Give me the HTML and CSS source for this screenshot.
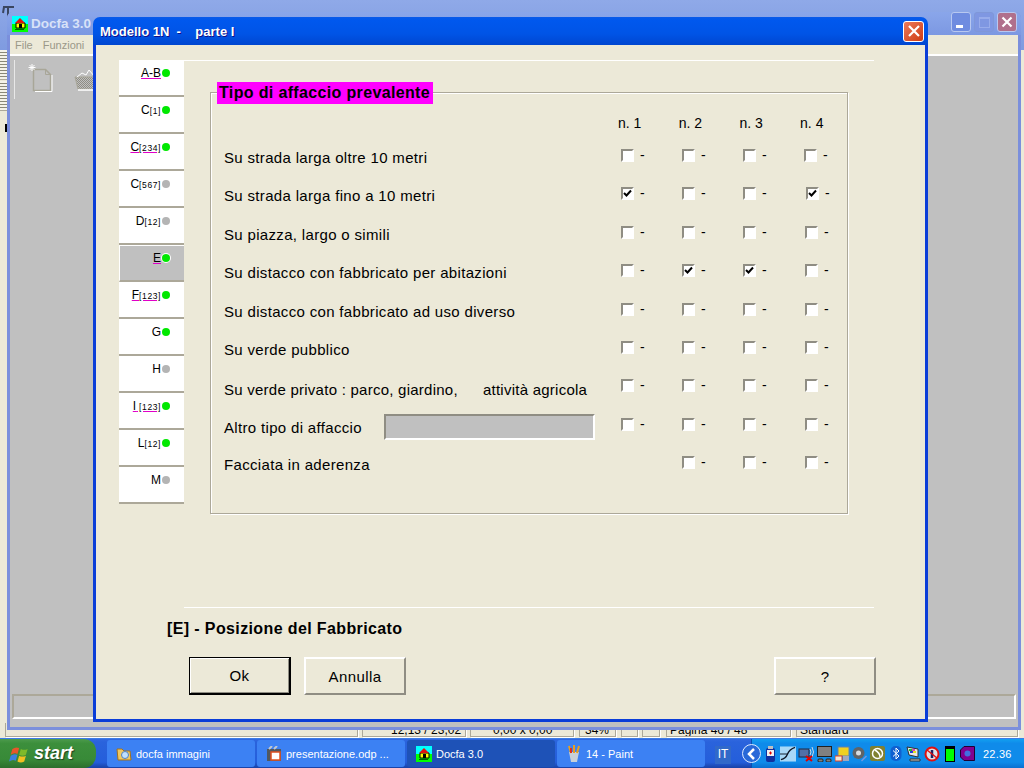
FILE: index.html
```html
<!DOCTYPE html>
<html lang="en">
<head>
    <meta charset="UTF-8">
    <title>Modello 1N - parte I</title>
    <link rel="stylesheet" href="styles.css">
</head>
<body>

<svg class="defs" width="0" height="0">
    <defs>
        <pattern id="dither" width="2" height="2" patternUnits="userSpaceOnUse">
            <rect width="2" height="2" fill="#c0c0c0"/>
            <rect width="1" height="1" fill="#8f8d83"/>
            <rect x="1" y="1" width="1" height="1" fill="#8f8d83"/>
        </pattern>
    </defs>
    <symbol id="docfa" viewBox="0 0 16 16">
        <rect width="16" height="16" fill="#00ff00"/>
        <rect width="16" height="8" fill="#00ffff"/>
        <path d="M4 12V7h9v5z" fill="#ffff00" stroke="#000"/>
        <path d="M3 7l5-5 5 5z" fill="#e01010"/>
        <rect x="7" y="8" width="3" height="4" fill="#000"/>
        <rect x="3" y="13" width="9" height="1" fill="#006000"/>
    </symbol>
    <symbol id="tick" viewBox="0 0 9 9">
        <path d="M1 4l2.5 2.5L8 1.5" fill="none" stroke="#000" stroke-width="2"/>
    </symbol>
</svg>

<div class="desktop">
    <div class="back-window">
        <div class="back-title">
            <svg width="13" height="14" viewBox="0 0 13 14"><path d="M1 2h11M6 2v11M2 2L1 8" fill="none" stroke="#3a4660" stroke-width="2"/></svg>
        </div>
        <div class="back-left">
            <div class="grip"></div>
            <div class="grip"></div>
            <div class="black-mark"></div>
        </div>
        <div class="back-status">
            <span class="stat stat-main"></span>
            <span class="stat stat-pos">12,13 / 23,02</span>
            <span class="stat stat-size">0,00 x 0,00</span>
            <span class="stat stat-zoom">34%</span>
            <span class="stat stat-a"></span>
            <span class="stat stat-b"></span>
            <span class="stat stat-page">Pagina 46 / 48</span>
            <span class="stat stat-style">Standard</span>
        </div>
    </div>

    <div class="app-window">
        <div class="app-title">
            <svg class="app-icon" width="16" height="16"><use href="#docfa"/></svg>
            <span class="app-name">Docfa 3.0</span>
            <span class="cap-btn cap-min"></span>
            <span class="cap-btn cap-max"></span>
            <span class="cap-btn cap-close">
                <svg width="14" height="14" viewBox="0 0 14 14"><path d="M2.5 2.5l9 9M11.5 2.5l-9 9" stroke="#fff" stroke-width="2.2"/></svg>
            </span>
        </div>
        <div class="app-menu"><span>File</span><span>Funzioni</span></div>
        <div class="app-body">
            <div class="toolbar">
                <div class="tool-sep"></div>
                <svg class="tool-new" width="26" height="30" viewBox="0 0 26 30">
                    <path d="M5.5 6.5h12l5 5v16h-17z" fill="none" stroke="#a8a698" stroke-width="1.5"/>
                    <path d="M7 28.5h17V12" fill="none" stroke="#fff"/>
                    <path d="M17.5 6.5v5h5" fill="none" stroke="#a8a698"/>
                    <path d="M4 1v7M0.500 4.500h7M1.500 2l5 5M6.500 2l-5 5" stroke="#fff"/>
                </svg>
                <svg class="tool-open" width="24" height="24" viewBox="0 0 24 24">
                    <path d="M1 9h22l-3 12H4z" fill="url(#dither)" stroke="#a8a698"/>
                    <path d="M3 9l5-4 4 2 3-5 6 7" fill="none" stroke="#fff"/>
                    <path d="M4 22h16" stroke="#fff" stroke-width="1.500"/>
                </svg>
            </div>
            <div class="app-status"></div>
        </div>
    </div>

    <div class="dialog">
        <div class="dialog-title">
            <span class="dialog-name">Modello 1N  -    parte I</span>
            <span class="dialog-close">
                <svg width="14" height="14" viewBox="0 0 14 14"><path d="M2 2l10 10M12 2L2 12" stroke="#fff" stroke-width="2.2"/></svg>
            </span>
        </div>
        <div class="dialog-body">
            <div class="dialog-main">
                <div class="tabs">
                    <div class="tab"><span class="tab-text mark">A-B</span><i class="dot"></i></div>
                    <div class="tab"><span class="tab-text">C<small>[1]</small></span><i class="dot"></i></div>
                    <div class="tab"><span class="tab-text mark">C<small>[234]</small></span><i class="dot"></i></div>
                    <div class="tab"><span class="tab-text">C<small>[567]</small></span><i class="dot off"></i></div>
                    <div class="tab"><span class="tab-text">D<small>[12]</small></span><i class="dot off"></i></div>
                    <div class="tab tab-active"><span class="tab-text mark">E</span><i class="dot"></i></div>
                    <div class="tab"><span class="tab-text mark">F<small>[123]</small></span><i class="dot"></i></div>
                    <div class="tab"><span class="tab-text">G</span><i class="dot"></i></div>
                    <div class="tab"><span class="tab-text">H</span><i class="dot off"></i></div>
                    <div class="tab"><span class="tab-text mark">I<small> [123]</small></span><i class="dot"></i></div>
                    <div class="tab"><span class="tab-text">L<small>[12]</small></span><i class="dot"></i></div>
                    <div class="tab"><span class="tab-text">M</span><i class="dot off"></i></div>
                </div>
                <div class="panel">
                    <div class="group">
                        <div class="legend">Tipo di affaccio prevalente</div>
                        <div class="col-heads">
                            <span>n. 1</span><span>n. 2</span><span>n. 3</span><span>n. 4</span>
                        </div>
                        <div class="grid">
                            <div class="lbl">Su strada larga oltre 10 metri</div>
                            <div class="opt"><b class="box"></b>-</div>
                            <div class="opt"><b class="box"></b>-</div>
                            <div class="opt"><b class="box"></b>-</div>
                            <div class="opt"><b class="box"></b>-</div>

                            <div class="lbl">Su strada larga fino a 10 metri</div>
                            <div class="opt"><b class="box on"><svg width="9" height="9"><use href="#tick"/></svg></b>-</div>
                            <div class="opt"><b class="box"></b>-</div>
                            <div class="opt"><b class="box"></b>-</div>
                            <div class="opt shift2"><b class="box on"><svg width="9" height="9"><use href="#tick"/></svg></b>-</div>

                            <div class="lbl">Su piazza, largo o simili</div>
                            <div class="opt"><b class="box"></b>-</div>
                            <div class="opt"><b class="box"></b>-</div>
                            <div class="opt"><b class="box"></b>-</div>
                            <div class="opt shift1"><b class="box"></b>-</div>

                            <div class="lbl">Su distacco con fabbricato per abitazioni</div>
                            <div class="opt"><b class="box"></b>-</div>
                            <div class="opt"><b class="box on"><svg width="9" height="9"><use href="#tick"/></svg></b>-</div>
                            <div class="opt"><b class="box on"><svg width="9" height="9"><use href="#tick"/></svg></b>-</div>
                            <div class="opt shift1"><b class="box"></b>-</div>

                            <div class="lbl">Su distacco con fabbricato ad uso diverso</div>
                            <div class="opt"><b class="box"></b>-</div>
                            <div class="opt"><b class="box"></b>-</div>
                            <div class="opt"><b class="box"></b>-</div>
                            <div class="opt shift1"><b class="box"></b>-</div>

                            <div class="lbl">Su verde pubblico</div>
                            <div class="opt"><b class="box"></b>-</div>
                            <div class="opt"><b class="box"></b>-</div>
                            <div class="opt"><b class="box"></b>-</div>
                            <div class="opt shift1"><b class="box"></b>-</div>

                            <div class="lbl lbl-low">Su verde privato : parco, giardino,<span class="lbl-gap"></span>attività agricola</div>
                            <div class="opt"><b class="box"></b>-</div>
                            <div class="opt"><b class="box"></b>-</div>
                            <div class="opt"><b class="box"></b>-</div>
                            <div class="opt shift1"><b class="box"></b>-</div>

                            <div class="lbl lbl-field">Altro tipo di affaccio<span class="field"></span></div>
                            <div class="opt"><b class="box"></b>-</div>
                            <div class="opt"><b class="box"></b>-</div>
                            <div class="opt"><b class="box"></b>-</div>
                            <div class="opt shift1"><b class="box"></b>-</div>

                            <div class="lbl">Facciata in aderenza</div>
                            <div class="opt opt-empty"></div>
                            <div class="opt"><b class="box"></b>-</div>
                            <div class="opt"><b class="box"></b>-</div>
                            <div class="opt shift1"><b class="box"></b>-</div>
                        </div>
                    </div>
                </div>
            </div>
            <div class="footer">
                <div class="footer-rule"></div>
                <div class="caption">[E] - Posizione del Fabbricato</div>
                <div class="buttons">
                    <button class="btn btn-default">Ok</button>
                    <button class="btn">Annulla</button>
                    <button class="btn btn-help">?</button>
                </div>
            </div>
        </div>
    </div>
</div>

<div class="taskbar">
    <div class="start">
        <svg width="22" height="22" viewBox="0 0 26 26">
            <path d="M4 7q4-3 8-1l-2 7q-4-2-8 1z" fill="#e8562a"/>
            <path d="M14 7q4 2 8 0l-2 7q-4 2-8 0z" fill="#7fba2a"/>
            <path d="M2 15q4-3 8-1l-2 7q-4-2-8 1z" fill="#3c7fe0"/>
            <path d="M12 15q4 2 8 0l-2 7q-4 2-8 0z" fill="#f4c020"/>
        </svg>
        <span>start</span>
    </div>
    <div class="tasks">
        <div class="task">
            <svg width="16" height="16" viewBox="0 0 16 16">
                <path d="M1 3h5l2 2h6l1 9H2z" fill="#f0c860" stroke="#a07020"/>
                <circle cx="9" cy="9" r="3.500" fill="#bfe0ff" stroke="#5080c0"/>
            </svg>
            <span>docfa immagini</span>
        </div>
        <div class="task">
            <svg width="16" height="16" viewBox="0 0 16 16">
                <rect x="1" y="3" width="14" height="12" fill="#505860"/>
                <rect x="5" y="6" width="9" height="8" fill="#fff" stroke="#e05020" stroke-width="1.500"/>
                <path d="M3 3l3-3M8 3l3-3" stroke="#c0c8d0" stroke-width="2"/>
            </svg>
            <span>presentazione.odp ...</span>
        </div>
        <div class="task task-active">
            <svg width="16" height="16"><use href="#docfa"/></svg>
            <span>Docfa 3.0</span>
        </div>
        <div class="task">
            <svg width="16" height="18" viewBox="0 0 16 18">
                <path d="M3 7h10l-2 10H5z" fill="#c8d0d8"/>
                <path d="M5 8L3 1M8 8V0M11 8l2-7" stroke="#e8a020" stroke-width="2"/>
                <path d="M5 8L5 3" stroke="#e03020" stroke-width="2"/>
            </svg>
            <span>14 - Paint</span>
        </div>
    </div>
    <div class="lang">IT</div>
    <div class="tray">
        <div class="tray-arrow">
            <svg width="12" height="12" viewBox="0 0 12 12"><path d="M8 1L3 6l5 5" fill="none" stroke="#fff" stroke-width="2.500"/></svg>
        </div>
        <div class="tray-icons">
            <svg width="11" height="16" viewBox="0 0 11 16"><rect x="1" y="2" width="9" height="14" rx="2" fill="#1030a0"/><rect x="3" y="0" width="5" height="3" fill="#c0c0c0"/><rect x="2" y="4" width="7" height="6" fill="#f0f0f0"/><path d="M4 7h3M5.500 5.500v3" stroke="#e00000"/></svg>
            <svg width="16" height="16" viewBox="0 0 17 16"><rect width="17" height="16" fill="#a8d8f8"/><path d="M1 14q5-1 7-6t8-7" fill="none" stroke="#101828" stroke-width="1.500"/><path d="M0 8h8" stroke="#101828"/></svg>
            <svg width="16" height="16" viewBox="0 0 16 16"><rect x="1" y="3" width="10" height="8" fill="#5070a8" stroke="#202840"/><path d="M12 3q2 3 0 6M14 1q3 5 0 10" fill="none" stroke="#d0d8e0"/><path d="M8 10l6 5M14 10l-6 5" stroke="#e00000" stroke-width="2"/></svg>
            <svg width="15" height="16" viewBox="0 0 15 16"><rect x="0.500" y="0.500" width="14" height="10" fill="#808080" stroke="#202020"/><rect x="1" y="13" width="5" height="3" rx="1" fill="#808080" stroke="#202020"/><rect x="9" y="13" width="5" height="3" rx="1" fill="#808080" stroke="#202020"/></svg>
            <svg width="15" height="16" viewBox="0 0 15 16"><rect x="3" y="1" width="11" height="9" fill="#f0d020" stroke="#6080b0"/><rect x="0" y="10" width="7" height="5" fill="#f0e8d8" stroke="#e04020"/><rect x="8" y="10" width="6" height="5" fill="#a0a8c0"/></svg>
            <svg width="16" height="16" viewBox="0 0 15 16"><circle cx="6" cy="7" r="6" fill="#606468"/><circle cx="6" cy="7" r="2.500" fill="#d8dce0"/><path d="M9 15l5-5" stroke="#7898e0" stroke-width="1.500"/></svg>
            <svg width="15" height="15" viewBox="0 0 15 15"><rect width="15" height="15" rx="2" fill="#808030"/><circle cx="7.500" cy="7.500" r="5" fill="none" stroke="#fff" stroke-width="1.500"/><path d="M5 4q5 3 5 7" fill="none" stroke="#fff" stroke-width="1.500"/></svg>
            <svg width="12" height="15" viewBox="0 0 11 15"><rect width="11" height="15" rx="5" fill="#1060d0"/><path d="M2.500 4.500l6 5.500-3 3V2l3 3-6 5.500" fill="none" stroke="#fff"/></svg>
            <svg width="16" height="16" viewBox="0 0 16 16"><path d="M1 1l11 2v8L3 9z" fill="#e8e8e8" stroke="#303030"/><path d="M3 3h3v2H3z" fill="#20c020"/><path d="M6 3h3v2H6z" fill="#e040c0"/><path d="M4 5h3v2H4z" fill="#2040e0"/><path d="M7 5h3v2H7z" fill="#e0e020"/><path d="M4 13h10v2H4z" fill="#d0d0d0" stroke="#303030"/></svg>
            <svg width="16" height="16" viewBox="0 0 16 16"><circle cx="8" cy="8" r="6.500" fill="#e0e0e8" stroke="#e01010" stroke-width="2"/><path d="M8 4v8" stroke="#202060" stroke-width="2.500"/><path d="M3 4l10 8" stroke="#e01010" stroke-width="1.500"/></svg>
            <svg width="10" height="16" viewBox="0 0 10 16"><rect width="10" height="16" fill="#000"/><rect x="1" y="3" width="8" height="12" fill="#00ff00"/></svg>
            <svg width="15" height="15" viewBox="0 0 15 15"><path d="M4 0.500h10.500v14H4l-3.500-3.500V4z" fill="#800090" stroke="#200030"/><circle cx="7.500" cy="7.500" r="3" fill="#4070e0"/></svg>
        </div>
        <div class="clock">22.36</div>
    </div>
</div>

</body>
</html>
```

FILE: styles.css
```css
html, body {
    margin: 0;
    height: 100%;
}

body {
    width: 1024px;
    height: 768px;
    overflow: hidden;
    display: flex;
    flex-direction: column;
    font-family: "Liberation Sans", Arial, sans-serif;
    color: #000;
    background-color: #c0c0c0;
}

.defs {
    position: absolute;
}

.desktop {
    position: relative;
    flex: 1;
    overflow: hidden;
    background-color: #ece9d8;
}

/* window behind the app, only its edges show */
.back-window {
    position: absolute;
    left: 0;
    top: 0;
    width: 1024px;
    height: 738px;
}

.back-title {
    box-sizing: border-box;
    height: 50px;
    padding: 5px 0 0 2px;
    background: linear-gradient(#8fa9e8, #7f9be0);
}

.back-left {
    width: 7px;
    height: 670px;
    display: flex;
    flex-direction: column;
    gap: 1px;
}

.grip {
    height: 29px;
    border-bottom: 1px solid #aca899;
    background: repeating-linear-gradient(#f4f2e8 0 2px, #8a8878 2px 3px);
}

.black-mark {
    width: 2px;
    height: 8px;
    margin: 12px 0 0 5px;
    background-color: #000;
}

.back-status {
    position: absolute;
    left: 5px;
    bottom: 1px;
    height: 14px;
    display: flex;
    font-size: 12px;
    line-height: 13px;
    white-space: nowrap;
}

.stat {
    box-sizing: border-box;
    height: 14px;
    padding-top: 1px;
    margin-right: 4px;
    border: 1px solid #aca899;
    border-top: 0;
    box-shadow: 1px 1px 0 #fff;
    overflow: hidden;
}

.stat-main { width: 353px; }
.stat-pos { width: 104px; padding-left: 28px; }
.stat-size { width: 104px; padding-left: 22px; margin-right: 5px; }
.stat-zoom { width: 37px; padding-left: 5px; margin-right: 5px; }
.stat-a { width: 17px; }
.stat-b { width: 18px; margin-right: 6px; }
.stat-page { width: 125px; padding-left: 3px; margin-right: 5px; }
.stat-style { width: 222px; padding-left: 3px; }

.app-window {
    position: absolute;
    left: 7px;
    top: 12px;
    width: 1014px;
    height: 718px;
    box-sizing: border-box;
    display: flex;
    flex-direction: column;
    border: solid #7b8fdc;
    border-width: 0 3px 3px;
    border-radius: 6px 6px 0 0;
    background-color: #c0c0c0;
}

.app-title {
    height: 23px;
    margin: 0 -3px;
    padding: 0 4px 0 5px;
    display: flex;
    align-items: center;
    background: linear-gradient(#8aa6ea, #7c98e2);
    border-radius: 6px 6px 0 0;
}

.app-name {
    flex: 1;
    margin-left: 3px;
    font-size: 13.500px;
    font-weight: bold;
    color: #d8e2f8;
}

.cap-btn {
    box-sizing: border-box;
    width: 20px;
    height: 20px;
    margin: -3px 0 0 3px;
    display: flex;
    align-items: center;
    justify-content: center;
    border: 1px solid #b8c8f0;
    border-radius: 3px;
    background-color: #6f8ce0;
}

.cap-min::before {
    content: "";
    width: 7px;
    height: 3px;
    margin: 8px 4px 0 0;
    background-color: #fff;
}

.cap-max {
    background-color: #7f97e2;
    border-color: #7f97d8;
}

.cap-max::before {
    content: "";
    width: 9px;
    height: 8px;
    border: 1px solid #98aceb;
    border-top-width: 2px;
}

.cap-close {
    background-color: #b0708c;
}

.app-menu {
    box-sizing: border-box;
    height: 20px;
    padding-left: 5px;
    display: flex;
    gap: 10px;
    align-items: center;
    border-bottom: 1px solid #fff;
    font-size: 11px;
    color: #9a9888;
    background-color: #ece9d8;
}

.app-body {
    flex: 1;
    display: flex;
    flex-direction: column;
    justify-content: space-between;
    border-top: 1px solid #fff;
    background-color: #c0c0c0;
}

.toolbar {
    padding: 4px 0 0 4px;
    display: flex;
    align-items: flex-start;
}

.tool-sep {
    width: 1px;
    height: 39px;
    background-color: #e8e8e8;
}

.tool-new {
    margin: 3px 0 0 13px;
}

.tool-open {
    margin: 8px 0 0 20px;
}

.app-status {
    box-sizing: border-box;
    height: 25px;
    margin: 0 2px 8px 2px;
    border: 2px solid;
    border-color: #aca899 #fff #fff #aca899;
    background-color: #c0c0c0;
}

.dialog {
    position: absolute;
    left: 93px;
    top: 17px;
    width: 835px;
    height: 705px;
    display: flex;
    flex-direction: column;
}

.dialog-title {
    height: 28px;
    padding: 0 4px 0 7px;
    display: flex;
    align-items: center;
    justify-content: space-between;
    border-radius: 7px 7px 0 0;
    background: linear-gradient(#0a5ae8 0, #0058ee 12%, #0054e6 60%, #0046d0 100%);
}

.dialog-name {
    font-size: 13px;
    font-weight: bold;
    color: #fff;
    white-space: pre;
    text-shadow: 1px 1px 0 #0f1089;
}

.dialog-close {
    box-sizing: border-box;
    width: 21px;
    height: 21px;
    display: flex;
    align-items: center;
    justify-content: center;
    border: 1px solid #fff;
    border-radius: 3px;
    background: linear-gradient(135deg, #ec7a5c, #cf3c12);
}

.dialog-body {
    flex: 1;
    display: flex;
    flex-direction: column;
    border: solid #0a3dd8;
    border-width: 0 3px 3px;
    background-color: #ece9d8;
}

.dialog-main {
    height: 547px;
    padding: 15px 0 0 23px;
    display: flex;
}

.tabs {
    width: 65px;
    flex: none;
}

.tab {
    box-sizing: border-box;
    height: 37px;
    padding: 5px 14px 0 0;
    display: flex;
    justify-content: flex-end;
    align-items: flex-start;
    border-bottom: 2px solid #aca899;
    border-top: 1px solid #fff;
    background-color: #fff;
    font-size: 12px;
    line-height: 15px;
}

.tab-active {
    background-color: #c0c0c0;
    border-left: 1px solid #fff;
}

.tab-text {
    white-space: pre;
}

.tab-text small {
    font-size: 8.500px;
    letter-spacing: 0.600px;
}

.mark {
    text-decoration: underline #e000c8;
}

.dot {
    flex: none;
    width: 8px;
    height: 8px;
    margin: 3px 0 0 1px;
    border-radius: 50%;
    background-color: #00e800;
}

.dot.off {
    background-color: #b4b4b4;
}

.tab-active .dot {
    box-shadow: 0 0 0 1px #fff;
}

.panel {
    flex: 1;
    padding: 31px 0 0 26px;
    border-top: 1px solid #fff;
    margin-right: 51px;
}

.group {
    position: relative;
    box-sizing: border-box;
    width: 638px;
    height: 422px;
    border: 1px solid #aca899;
    box-shadow: inset 1px 1px 0 #fff, 1px 1px 0 #fff;
}

.legend {
    position: absolute;
    left: 6px;
    top: -11px;
    height: 22px;
    padding: 0 3px 0 2px;
    font-size: 16px;
    font-weight: bold;
    line-height: 21px;
    letter-spacing: 0.350px;
    background-color: #ff00ff;
    white-space: nowrap;
}

.col-heads {
    height: 56px;
    padding-left: 407px;
    display: flex;
    font-size: 14px;
    line-height: 60px;
}

.col-heads span {
    flex: none;
    width: 60.700px;
}

.grid {
    display: grid;
    grid-template-columns: 397px 61px 61px 61px 1fr;
    grid-auto-rows: 38.400px;
    padding-left: 13px;
}

.lbl {
    font-size: 15px;
    line-height: 18px;
    letter-spacing: 0.330px;
    white-space: nowrap;
    display: flex;
    align-items: flex-start;
}

.lbl-low {
    padding-top: 2px;
    letter-spacing: 0.250px;
}

.lbl-gap {
    width: 25px;
}

.lbl-field {
    padding-top: 1px;
}

.field {
    box-sizing: border-box;
    width: 211px;
    height: 26px;
    margin: -5px 0 0 22px;
    border: 2px solid;
    border-color: #8f8d83 #fff #fff #8f8d83;
    background-color: #c0c0c0;
}

.opt {
    display: flex;
    gap: 6px;
    align-items: flex-start;
    font-size: 14px;
    line-height: 13px;
}

.box {
    box-sizing: border-box;
    width: 13px;
    height: 13px;
    display: flex;
    align-items: center;
    justify-content: center;
    border: 2px solid;
    border-color: #8f8d83 #fff #fff #8f8d83;
    background-color: #fff;
}

.box.on svg {
    flex: none;
    margin: -1px 0 0 -1px;
}

.shift1 { margin-left: 1px; }
.shift2 { margin-left: 2px; }

.footer {
    width: 709px;
    margin-left: 71px;
    display: flex;
    flex-direction: column;
}

.footer-rule {
    height: 1px;
    margin: 0 2px 0 17px;
    background-color: #fff;
}

.caption {
    margin-top: 12px;
    font-size: 16px;
    font-weight: bold;
    line-height: 18px;
    letter-spacing: 0.380px;
}

.buttons {
    margin-top: 19px;
    padding-left: 22px;
    display: flex;
    gap: 13px;
}

.btn {
    box-sizing: border-box;
    width: 102px;
    height: 38px;
    padding: 0;
    border: 2px solid;
    border-color: #fff #8f8d83 #8f8d83 #fff;
    background-color: #ece9d8;
    font-family: inherit;
    font-size: 15px;
    letter-spacing: 0.400px;
}

.btn-default {
    border: 2px solid #000;
    border-width: 1px 2px 2px 1px;
    box-shadow: inset 1px 1px 0 #fff, inset -1px -1px 0 #8f8d83;
}

.btn-help {
    margin-left: auto;
}

.taskbar {
    flex: none;
    height: 30px;
    display: flex;
    align-items: stretch;
    background: linear-gradient(#3168e0 0, #2a63dc 10%, #245edb 80%, #1941a5 100%);
    border-top: 1px solid #3c7ce8;
    box-sizing: border-box;
}

.start {
    width: 96px;
    padding-left: 9px;
    box-sizing: border-box;
    display: flex;
    align-items: center;
    gap: 3px;
    border-radius: 0 12px 12px 0;
    background: linear-gradient(#4d9b4d 0, #3c8f3c 15%, #388a38 70%, #2c6e2c 100%);
    color: #fff;
    font-size: 18px;
    font-weight: bold;
    font-style: italic;
    text-shadow: 1px 1px 1px #204020;
}

.tasks {
    margin-left: 11px;
    display: flex;
    gap: 2px;
}

.task {
    box-sizing: border-box;
    width: 148px;
    margin: 1px 0;
    padding-left: 9px;
    display: flex;
    align-items: center;
    gap: 4px;
    border-radius: 3px;
    background-color: #3c81f3;
    color: #fff;
    font-size: 11px;
    white-space: nowrap;
}

.task-active {
    background-color: #1e52b7;
}

.lang {
    margin: 7px 0 4px 10px;
    width: 16px;
    font-size: 12px;
    line-height: 17px;
    text-align: center;
    color: #fff;
    background-color: #3169c9;
}

.tray {
    flex: 1;
    margin-left: 20px;
    display: flex;
    align-items: center;
    background: linear-gradient(#12a0f0 0, #0f8bea 15%, #0f8bea 80%, #0b6fd0 100%);
    border-left: 1px solid #0a50b0;
}

.tray-arrow {
    box-sizing: border-box;
    flex: none;
    width: 19px;
    height: 19px;
    margin-left: -10px;
    display: flex;
    align-items: center;
    justify-content: center;
    border: 1px solid #e0ecff;
    border-radius: 50%;
    background-color: #2868d8;
}

.tray-icons {
    margin-left: 4px;
    display: flex;
    align-items: center;
    gap: 2px;
}

/* tray icons are not evenly spaced */
.tray-icons svg:nth-child(2) { margin-left: 2px; }
.tray-icons svg:nth-child(3) { margin-left: 0; }
.tray-icons svg:nth-child(4) { margin-left: 1px; }
.tray-icons svg:nth-child(5) { margin-left: 1px; }
.tray-icons svg:nth-child(8) { margin-left: 3px; }
.tray-icons svg:nth-child(9) { margin-left: 2px; }
.tray-icons svg:nth-child(11) { margin-left: 3px; }
.tray-icons svg:nth-child(12) { margin-left: 3px; }

.clock {
    margin-left: 8px;
    font-size: 11px;
    letter-spacing: 0.200px;
    color: #fff;
}
```
